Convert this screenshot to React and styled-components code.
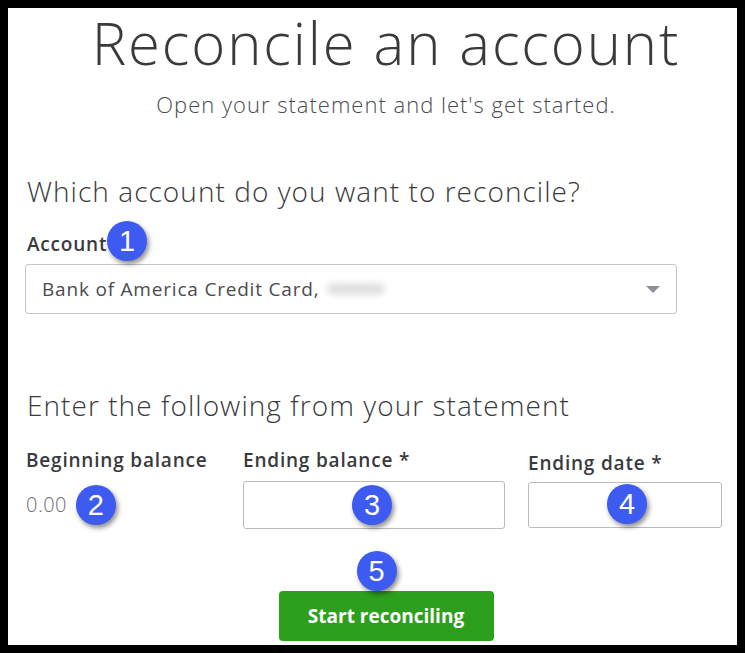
import React from 'react';
import styled, { createGlobalStyle } from 'styled-components';

const GlobalStyle = createGlobalStyle`
    html, body {
        margin: 0;
        padding: 0;
        background: #000;
    }
    * {
        box-sizing: border-box;
    }
`;

const App = () => {
    return (
        <>
            <GlobalStyle />
            <Frame>
                <Panel>
                    <Header>
                        <Title>Reconcile an account</Title>
                        <Subtitle>Open your statement and let's get started.</Subtitle>
                    </Header>

                    <SectionTitle $top={57}>Which account do you want to reconcile?</SectionTitle>
                    <LabelRow>
                        <Label>Account</Label>
                        <Callout $x={82} $y={-12}>1</Callout>
                    </LabelRow>
                    <Select>
                        <span>Bank of America Credit Card,</span>
                        <Blur />
                        <Caret />
                    </Select>

                    <SectionTitle $top={74}>Enter the following from your statement</SectionTitle>
                    <Fields>
                        <Field $w={217}>
                            <Label>Beginning balance</Label>
                            <Amount>
                                0.00
                                <Callout $x={50} $y={-8}>2</Callout>
                            </Amount>
                        </Field>
                        <Field $w={262}>
                            <Label>Ending balance *</Label>
                            <Input $h={48}>
                                <Callout $x={108} $y={3}>3</Callout>
                            </Input>
                        </Field>
                        <Field $w={194} $drop={3} $gap={8}>
                            <Label>Ending date *</Label>
                            <Input $h={46}>
                                <Callout $x={78} $y={1}>4</Callout>
                            </Input>
                        </Field>
                    </Fields>

                    <Footer>
                        <ButtonWrap>
                            <Callout $x={78} $y={-40}>5</Callout>
                            <Button>Start reconciling</Button>
                        </ButtonWrap>
                    </Footer>
                </Panel>
            </Frame>
        </>
    );
};

/* FRAME */
const Frame = styled.div`
    width: 745px;
    height: 653px;
    padding: 8px;
    background: #000;
`;

const Panel = styled.div`
    width: 729px;
    height: 637px;
    background: #fff;
    padding: 0 0 0 17px;
    font-family: "Open Sans", Lato, sans-serif;
    color: #393a3d;
`;

/* HEADER */
const Header = styled.div`
    display: flex;
    flex-direction: column;
    align-items: center;
    padding: 2px 0 0 10px;
`;

const Title = styled.h1`
    margin: 0;
    font-size: 58px;
    font-weight: 300;
    line-height: 66px;
    letter-spacing: 1.9px;
    color: #393a3d;
    white-space: nowrap;
`;

const Subtitle = styled.p`
    margin: 15px 0 0;
    font-size: 22px;
    font-weight: 300;
    line-height: 26px;
    letter-spacing: 1px;
    color: #4a4b4f;
    white-space: nowrap;
`;

const SectionTitle = styled.h2`
    margin: ${p => p.$top}px 0 0;
    padding-left: 2px;
    font-size: 28px;
    font-weight: 300;
    line-height: 34px;
    letter-spacing: 1.05px;
    color: #393a3d;
    white-space: nowrap;
`;

const LabelRow = styled.div`
    position: relative;
    margin-top: 25px;
    padding-left: 2px;
`;

const Label = styled.div`
    font-size: 19px;
    font-weight: 600;
    line-height: 22px;
    letter-spacing: 0.8px;
    color: #393a3d;
    white-space: nowrap;
`;

/* SELECT */
const Select = styled.div`
    display: flex;
    align-items: center;
    width: 652px;
    height: 50px;
    margin-top: 9px;
    padding: 0 16px;
    border: 1px solid #c4c6c9;
    border-radius: 3px;
    font-size: 19px;
    font-weight: 400;
    letter-spacing: 0.8px;
    color: #4a4b4f;
`;

const Blur = styled.span`
    width: 58px;
    height: 12px;
    margin-left: 8px;
    border-radius: 6px;
    background: #e0e0e0;
    filter: blur(3px);
`;

const Caret = styled.span`
    margin-left: auto;
    width: 0;
    height: 0;
    border-left: 7px solid transparent;
    border-right: 7px solid transparent;
    border-top: 7px solid #8d9096;
`;

/* FIELDS */
const Fields = styled.div`
    display: flex;
    gap: 23px;
    margin-top: 27px;
    padding-left: 1px;
`;

const Field = styled.div`
    flex: 0 0 ${p => p.$w}px;
    margin-right: ${p => (p.$w === 217 ? -23 : 0)}px;
    padding-top: ${p => p.$drop || 0}px;
    display: flex;
    flex-direction: column;
    gap: ${p => p.$gap || 10}px;
`;

const Amount = styled.div`
    position: relative;
    margin-top: 12px;
    font-size: 20px;
    font-weight: 300;
    line-height: 24px;
    letter-spacing: 0.5px;
    color: #6b6c72;
`;

const Input = styled.div`
    position: relative;
    height: ${p => p.$h}px;
    border: 1px solid #b8bac0;
    border-radius: 3px;
`;

/* BUTTON */
const Footer = styled.div`
    display: flex;
    justify-content: center;
    margin-top: 62px;
    padding-left: 10px;
`;

const ButtonWrap = styled.div`
    position: relative;
`;

const Button = styled.button`
    display: block;
    width: 215px;
    height: 50px;
    border: none;
    border-radius: 4px;
    background: #2ca01c;
    color: #fff;
    font-family: "Open Sans", Lato, sans-serif;
    font-size: 19px;
    font-weight: 700;
`;

/* CALLOUT */
const Callout = styled.div`
    position: absolute;
    left: ${p => p.$x}px;
    top: ${p => p.$y}px;
    width: 40px;
    height: 40px;
    border-radius: 50%;
    background: #3d5af1;
    box-shadow: 2px 3px 5px rgba(0, 0, 0, 0.45);
    color: #fff;
    font-family: "Liberation Sans", Arial, sans-serif;
    font-size: 29px;
    font-weight: 400;
    line-height: 40px;
    text-align: center;
`;

export default App;
